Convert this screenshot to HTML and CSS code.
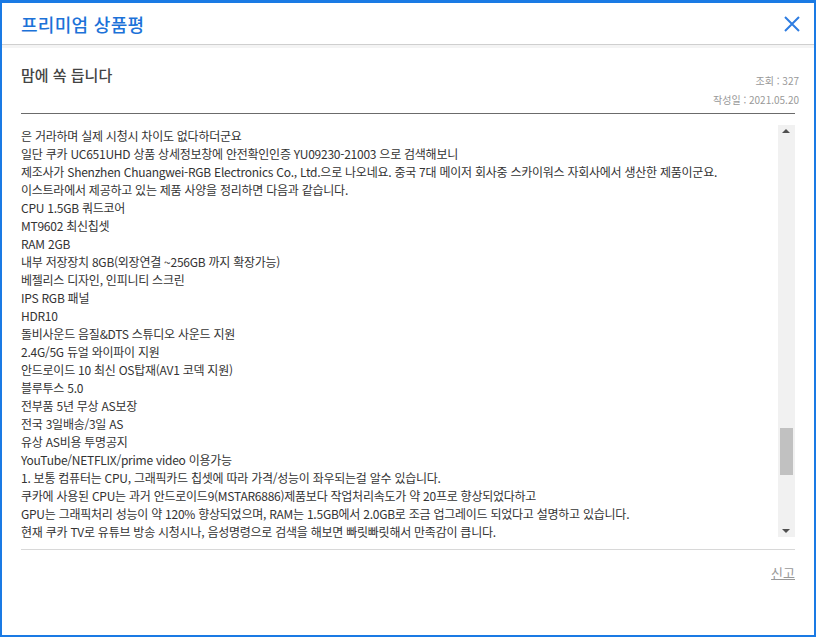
FILE: index.html
```html
<!DOCTYPE html>
<html lang="ko">
<head>
  <meta charset="UTF-8" />
  <title>프리미엄 상품평</title>
  <link rel="stylesheet" href="styles.css">
</head>
<body>
  <div class="popup">
    <header class="popup-head">
      <h1>프리미엄 상품평</h1>
      <a class="close" href="#" aria-label="닫기">
        <svg width="16" height="16" viewBox="0 0 16 16">
          <path d="M1 1 L15 15 M15 1 L1 15" stroke="#2f7de1" stroke-width="2" fill="none" />
        </svg>
      </a>
    </header>

    <main class="review">
      <div class="review-top">
        <h2>맘에 쏙 듭니다</h2>
        <div class="meta">
          <p>조회 : 327</p>
          <p>작성일 : 2021.05.20</p>
        </div>
      </div>

      <div class="review-box">
        <div class="review-text">
          <p>은 거라하며 실제 시청시 차이도 없다하더군요</p>
          <p>일단 쿠카 UC651UHD 상품 상세정보창에 안전확인인증 YU09230-21003 으로 검색해보니</p>
          <p>제조사가 Shenzhen Chuangwei-RGB Electronics Co., Ltd.으로 나오네요. 중국 7대 메이저 회사중 스카이워스 자회사에서 생산한 제품이군요.</p>
          <p>이스트라에서 제공하고 있는 제품 사양을 정리하면 다음과 같습니다.</p>
          <p>CPU 1.5GB 쿼드코어</p>
          <p>MT9602 최신칩셋</p>
          <p>RAM 2GB</p>
          <p>내부 저장장치 8GB(외장연결 ~256GB 까지 확장가능)</p>
          <p>베젤리스 디자인, 인피니티 스크린</p>
          <p>IPS RGB 패널</p>
          <p>HDR10</p>
          <p>돌비사운드 음질&amp;DTS 스튜디오 사운드 지원</p>
          <p>2.4G/5G 듀얼 와이파이 지원</p>
          <p>안드로이드 10 최신 OS탑재(AV1 코덱 지원)</p>
          <p>블루투스 5.0</p>
          <p>전부품 5년 무상 AS보장</p>
          <p>전국 3일배송/3일 AS</p>
          <p>유상 AS비용 투명공지</p>
          <p>YouTube/NETFLIX/prime video 이용가능</p>
          <p>1. 보통 컴퓨터는 CPU, 그래픽카드 칩셋에 따라 가격/성능이 좌우되는걸 알수 있습니다.</p>
          <p>쿠카에 사용된 CPU는 과거 안드로이드9(MSTAR6886)제품보다 작업처리속도가 약 20프로 향상되었다하고</p>
          <p>GPU는 그래픽처리 성능이 약 120% 향상되었으며, RAM는 1.5GB에서 2.0GB로 조금 업그레이드 되었다고 설명하고 있습니다.</p>
          <p>현재 쿠카 TV로 유튜브 방송 시청시나, 음성명령으로 검색을 해보면 빠릿빠릿해서 만족감이 큽니다.</p>
        </div>
        <div class="scrollbar">
          <span class="arrow up"></span>
          <span class="track-gap"></span>
          <span class="thumb"></span>
          <span class="track-rest"></span>
          <span class="arrow down"></span>
        </div>
      </div>

      <div class="report">
        <a href="#">신고</a>
      </div>
    </main>
  </div>
</body>
</html>
```

FILE: styles.css
```css
body {
  margin: 0;
  font-family: "Noto Sans CJK KR", "Noto Sans", sans-serif;
  background: #fff;
  color: #333;
}

.popup {
  box-sizing: border-box;
  width: 816px;
  height: 637px;
  border: 2px solid #1a7ae4;
  border-top-width: 3px;
  background: #fff;
}

.popup-head {
  display: flex;
  justify-content: space-between;
  align-items: center;
  height: 41px;
  padding: 0 14px 0 19px;
  border-bottom: 1px solid #cfcfcf;
  box-shadow: 0 3px 0 #f4f4f4;
}

.popup-head h1 {
  margin: 0;
  font-size: 18px;
  font-weight: 500;
  color: #1c72d8;
  letter-spacing: 0.3px;
}

.close {
  display: flex;
  padding-top: 1px;
}

.review {
  padding: 0 19px;
}

.review-top {
  display: flex;
  justify-content: space-between;
  align-items: flex-start;
  height: 65px;
  padding-top: 3px;
  border-bottom: 1px solid #6b6b6b;
}

.review-top h2 {
  margin: 16px 0 0;
  font-size: 15px;
  font-weight: 500;
  color: #444;
}

.meta {
  margin: 23px -4px 0 0;
  text-align: right;
  font-size: 10px;
  color: #999;
}

.meta p {
  margin: 0;
  line-height: 19px;
}

.review-box {
  display: flex;
  height: 412px;
  margin-top: 11px;
  padding-bottom: 12px;
  border-bottom: 1px solid #d8d8d8;
}

.review-text {
  flex: 1;
  padding-top: 2px;
  font-size: 12px;
  line-height: 18px;
  color: #333;
  letter-spacing: -0.25px;
}

.review-text p {
  margin: 0;
  white-space: nowrap;
}

.scrollbar {
  display: flex;
  flex-direction: column;
  align-items: center;
  width: 17px;
  background: #f1f1f1;
}

.arrow {
  width: 17px;
  height: 17px;
  position: relative;
}

.arrow::after {
  content: "";
  position: absolute;
  left: 4px;
  border-left: 4px solid transparent;
  border-right: 4px solid transparent;
}

.arrow.up::after {
  top: 4px;
  border-bottom: 4px solid #505050;
}

.arrow.down::after {
  bottom: 4px;
  border-top: 4px solid #505050;
}

.track-gap {
  height: 286px;
}

.thumb {
  width: 13px;
  height: 47px;
  background: #c1c1c1;
}

.track-rest {
  flex: 1;
}

.report {
  display: flex;
  justify-content: flex-end;
  padding-top: 13px;
}

.report a {
  font-size: 13px;
  color: #999;
  text-decoration: underline;
}
```
